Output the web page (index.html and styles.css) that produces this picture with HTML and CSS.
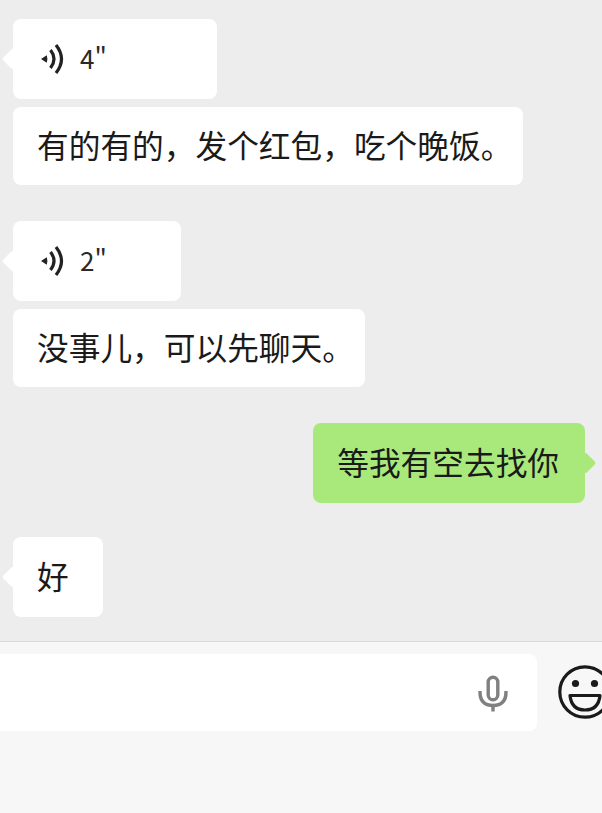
FILE: index.html
```html
<!DOCTYPE html>
<html lang="zh-CN">
<head>
<meta charset="utf-8">
<title>聊天</title>
<link rel="stylesheet" href="styles.css">
</head>
<body>
<main class="chat">
  <div class="messages">
    <div class="bubble voice voice-long tail-left">
      <svg class="voice-icon" viewBox="0 0 24 32" aria-hidden="true">
        <path class="fill" d="M1 16 L6.8 12.2 Q8 16 6.8 19.8 Z"/>
        <path class="stroke" d="M10.5 7 Q17.5 16 10.5 25"/>
        <path class="stroke" d="M16 2 Q27 16 16 30"/>
      </svg>
      <span class="duration">4"</span>
    </div>
    <div class="bubble text follow">有的有的，发个红包，吃个晚饭<span class="hang">。</span></div>

    <div class="bubble voice voice-short tail-left group">
      <svg class="voice-icon" viewBox="0 0 24 32" aria-hidden="true">
        <path class="fill" d="M1 16 L6.8 12.2 Q8 16 6.8 19.8 Z"/>
        <path class="stroke" d="M10.5 7 Q17.5 16 10.5 25"/>
        <path class="stroke" d="M16 2 Q27 16 16 30"/>
      </svg>
      <span class="duration">2"</span>
    </div>
    <div class="bubble text follow">没事儿，可以先聊天<span class="hang">。</span></div>

    <div class="bubble tall mine tail-right group">等我有空去找你</div>

    <div class="bubble tall single tail-left group-tight">好</div>
  </div>

  <footer class="composer">
    <div class="input">
      <svg class="mic" viewBox="0 0 30 38" aria-hidden="true">
        <rect class="mic-head" x="10.2" y="3.2" width="9.6" height="22.6" rx="4.8"/>
        <path class="mic-arc" d="M2 17 V18 Q2 31.5 15 31.5 Q28 31.5 28 18 V17"/>
        <path class="mic-arc" d="M15 31.5 V37.5"/>
      </svg>
    </div>
    <svg class="emoji" viewBox="0 0 54 54" aria-hidden="true">
      <circle class="face" cx="27" cy="27" r="25.2"/>
      <circle class="eye" cx="17.5" cy="18.5" r="3.6"/>
      <circle class="eye" cx="36.5" cy="18.5" r="3.6"/>
      <path class="mouth" d="M12 30.5 H42 Q40.5 45 27 45 Q13.5 45 12 30.5 Z"/>
    </svg>
  </footer>
</main>
</body>
</html>
```

FILE: styles.css
```css
* {
  box-sizing: border-box;
}

html,
body {
  margin: 0;
  height: 100%;
}

body {
  background: #ededed;
  font-family: "Noto Sans CJK SC", "Noto Sans", sans-serif;
  color: #1a1a1a;
  overflow: hidden;
}

.chat {
  display: flex;
  flex-direction: column;
  height: 813px;
}

.messages {
  flex: 0 0 641px;
  display: flex;
  flex-direction: column;
  align-items: flex-start;
  padding: 19px 17px 0 13px;
}

.bubble {
  position: relative;
  display: flex;
  align-items: center;
  background: #fff;
  border-radius: 8px;
  font-size: 31.7px;
  line-height: 1;
  padding: 0 26px 2px 24px;
  white-space: nowrap;
}

.text {
  height: 78px;
}

.tall,
.voice {
  height: 80px;
}

.follow {
  margin-top: 8px;
}

.group {
  margin-top: 36px;
}

.group-tight {
  margin-top: 34px;
}

.hang {
  margin-right: -15px;
}

.single {
  min-width: 90px;
}

.mine {
  align-self: flex-end;
  background: #a9e97b;
}

.tail-left::before,
.tail-right::after {
  content: "";
  position: absolute;
  top: 50%;
  width: 15px;
  height: 15px;
  background: inherit;
  border-radius: 2px;
  transform: translateY(-50%) rotate(45deg);
}

.tail-left::before {
  left: -8px;
}

.tail-right::after {
  right: -8px;
}

.voice-long {
  width: 204px;
}

.voice-short {
  width: 168px;
}

.voice {
  padding: 0 0 0 27px;
  gap: 16px;
}

.voice-icon {
  flex: none;
  width: 24px;
  height: 32px;
}

.voice-icon .fill {
  fill: #222;
}

.voice-icon .stroke {
  fill: none;
  stroke: #222;
  stroke-width: 3.2;
}

.duration {
  font-size: 26px;
  color: #2a2a2a;
  margin-top: -2px;
}

.composer {
  flex: 1;
  display: flex;
  align-items: flex-start;
  background: #f7f7f7;
  border-top: 1px solid #d9d9d9;
  padding-top: 12px;
  overflow: hidden;
}

.input {
  flex: none;
  width: 537px;
  height: 77px;
  display: flex;
  align-items: center;
  justify-content: flex-end;
  background: #fff;
  border-radius: 0 8px 8px 0;
  padding-right: 29px;
}

.mic {
  width: 30px;
  height: 38px;
}

.mic-head {
  fill: none;
  stroke: #808080;
  stroke-width: 3.4;
}

.mic-arc {
  fill: none;
  stroke: #808080;
  stroke-width: 3.4;
}

.emoji {
  flex: none;
  width: 54px;
  height: 54px;
  margin: 11px 0 0 21px;
}

.face {
  fill: none;
  stroke: #1a1a1a;
  stroke-width: 3.2;
}

.eye {
  fill: #1a1a1a;
}

.mouth {
  fill: none;
  stroke: #1a1a1a;
  stroke-width: 3.2;
  stroke-linejoin: round;
}
```
